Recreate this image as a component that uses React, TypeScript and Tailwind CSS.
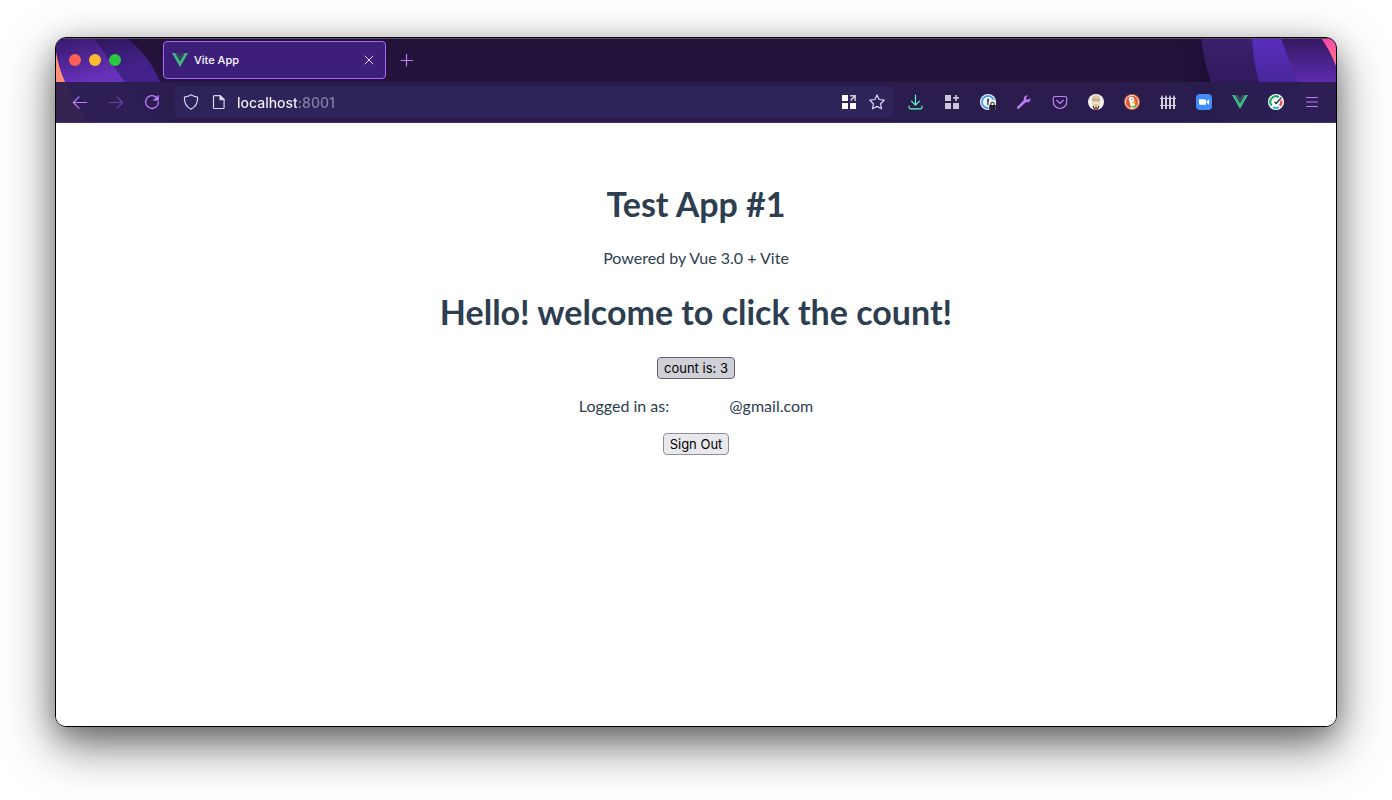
import { useState, type ReactNode } from "react";

function VueLogo() {
  return (
    <svg viewBox="0 0 16 14" className="h-[14px] w-4" aria-hidden="true">
      <path d="M0 0h3.2L8 8.2 12.8 0H16L8 13.9z" fill="#41b883" />
      <path d="M3.2 0h2.9L8 3.3 9.9 0h2.9L8 8.2z" fill="#35495e" />
    </svg>
  );
}

function Icon({ children, className = "" }: { children: ReactNode; className?: string }) {
  return (
    <svg
      viewBox="0 0 16 16"
      className={`size-4 shrink-0 ${className}`}
      fill="none"
      stroke="currentColor"
      strokeWidth="1.2"
      strokeLinecap="round"
      strokeLinejoin="round"
      aria-hidden="true"
    >
      {children}
    </svg>
  );
}

function ToolButton({ label, children, className = "" }: { label: string; children: ReactNode; className?: string }) {
  return (
    <button type="button" aria-label={label} className={`flex h-8 w-9 shrink-0 items-center justify-center text-[#bd7df8] ${className}`}>
      {children}
    </button>
  );
}

function HeaderArt() {
  return (
    <div className="pointer-events-none absolute inset-0 flex justify-between" aria-hidden="true">
      <svg viewBox="0 0 110 84" className="h-[84px] w-[110px]">
        <defs>
          <linearGradient id="la" x1="0" y1="0" x2="0.3" y2="1">
            <stop offset="0" stopColor="#35196a" />
            <stop offset="0.55" stopColor="#6831ba" />
          </linearGradient>
          <linearGradient id="lb" x1="0" y1="0" x2="0.3" y2="1">
            <stop offset="0" stopColor="#2a1550" />
            <stop offset="0.5" stopColor="#43218a" />
          </linearGradient>
        </defs>
        <path d="M0 0H70Q92 15 104 44L110 84H0z" fill="url(#lb)" />
        <path d="M0 0H38Q53 22 69 44L98 84H0z" fill="url(#la)" />
        <path d="M0 14Q3 31 9 44L30 84H0z" fill="#ff9077" />
      </svg>
      <svg viewBox="0 0 160 84" className="h-[84px] w-[160px]">
        <defs>
          <linearGradient id="rs" x1="0" y1="0" x2="1" y2="0">
            <stop offset="0" stopColor="#180c30" stopOpacity="0" />
            <stop offset="1" stopColor="#180c30" stopOpacity="0.8" />
          </linearGradient>
          <linearGradient id="ra" x1="0" y1="0" x2="0" y2="0.55">
            <stop offset="0" stopColor="#39206c" />
            <stop offset="1" stopColor="#321a5e" />
          </linearGradient>
          <linearGradient id="rb" x1="0" y1="0" x2="0" y2="0.55">
            <stop offset="0" stopColor="#5a2dbd" />
            <stop offset="1" stopColor="#47279a" />
          </linearGradient>
          <linearGradient id="rc" x1="0" y1="0" x2="0" y2="0.55">
            <stop offset="0" stopColor="#351861" />
            <stop offset="1" stopColor="#602cb0" />
          </linearGradient>
          <linearGradient id="rd" x1="0" y1="0" x2="0" y2="1">
            <stop offset="0" stopColor="#ff45a5" />
            <stop offset="1" stopColor="#ff7c8c" />
          </linearGradient>
        </defs>
        <path d="M0 0H30L36 44V84H0z" fill="url(#rs)" />
        <path d="M25 0Q28 24 35 44L50 84H160V0z" fill="url(#ra)" />
        <path d="M76 0Q77 22 83 44L95 84H160V0z" fill="url(#rb)" />
        <path d="M105 0Q112 22 122 44L140 84H160V0z" fill="url(#rc)" />
        <path d="M145 0Q154 12 160 28V0z" fill="url(#rd)" />
      </svg>
    </div>
  );
}

function TabBar() {
  return (
    <div className="relative flex h-11 items-center shadow-[inset_0_1px_0_#5a4c71]">
      <div className="flex w-[107px] shrink-0 gap-2 pl-[13px]">
        <button type="button" aria-label="Close window" className="size-3 rounded-full bg-[#ff5f57]" />
        <button type="button" aria-label="Minimize window" className="size-3 rounded-full bg-[#febc2e]" />
        <button type="button" aria-label="Zoom window" className="size-3 rounded-full bg-[#28c840]" />
      </div>
      <div className="flex h-[38px] w-[223px] items-center rounded border border-[#a766f5] bg-[#3d1f79] pr-2 pl-2">
        <VueLogo />
        <span className="ml-[6px] flex-1 pt-px text-[11px] font-medium text-[#fbf8ff]">Vite App</span>
        <button type="button" aria-label="Close tab" className="flex size-4 items-center justify-center text-[#e6d8fa]">
          <Icon><path d="M4 4l8 8M12 4l-8 8" strokeWidth="1" /></Icon>
        </button>
      </div>
      <ToolButton label="New tab" className="ml-[3px]">
        <Icon><path d="M7.500 2.500v11.500M2 8.500h11.500" /></Icon>
      </ToolButton>
    </div>
  );
}

function AddressBar() {
  return (
    <div className="mx-[5px] flex h-8 min-w-0 flex-1 items-center rounded bg-[#2e2459] px-2 text-[#dcd2f3]">
      <Icon><path d="M8 .8c2 1.4 4.200 2 6.600 2.400.3 5-1.500 9.200-6.600 12C2.900 12.400 1.100 8.200 1.400 3.200 3.800 2.800 6 2.200 8 .8z" /></Icon>
      <Icon className="ml-3">
        <path d="M3.500 1.600h5.700l3.900 3.900v8a1 1 0 0 1-1 1H3.500a1 1 0 0 1-1-1v-10.900a1 1 0 0 1 1-1z" />
        <path d="M9 1.600v4h4.100z" fill="currentColor" />
      </Icon>
      <input
        type="text"
        aria-label="Address"
        defaultValue="localhost:8001"
        className="ml-[10px] min-w-0 flex-1 bg-linear-to-r from-[#f6f2ff] from-[60px] to-[#8b80aa] to-[60px] bg-clip-text pt-px text-sm font-medium text-transparent outline-none"
      />
      <button type="button" aria-label="Open containers" className="flex size-4 items-center justify-center">
        <Icon>
          <path d="M1 1h6v6H1zM1 9h6v6H1zM9 9h6v6H9z" fill="#fff" stroke="none" />
          <path d="M9 1h6v6h-1.500V3.800L10.300 7 9 5.700l3.200-3.200H9z" fill="#c9c7cc" stroke="none" />
        </Icon>
      </button>
      <button type="button" aria-label="Bookmark this page" className="ml-3 flex size-4 items-center justify-center">
        <Icon><path d="M8 .9l2.200 4.600 5 .7-3.600 3.500.9 5.100L8 12.400l-4.500 2.400.9-5.100L.8 6.200l5-.7z" /></Icon>
      </button>
    </div>
  );
}

function Toolbar() {
  return (
    <div className="relative flex h-[41px] items-center border-b border-[#403478] bg-[#2a1d4ff2] px-[6px]">
      <ToolButton label="Back"><Icon><path d="M14.700 8.500H1.500M7 2.900L1.400 8.500 7 14.100" /></Icon></ToolButton>
      <ToolButton label="Forward" className="opacity-40"><Icon><path d="M1.300 8.500h13.200M9 2.900l5.600 5.600L9 14.100" /></Icon></ToolButton>
      <ToolButton label="Reload">
        <Icon><path d="M12.500 3.500A6.400 6.400 0 1 0 14.400 8" strokeWidth="1.300" /><path d="M14.300 1.700v4.500H9.800z" fill="currentColor" strokeWidth=".8" /></Icon>
      </ToolButton>
      <AddressBar />
      <ToolButton label="Downloads">
        <Icon className="text-[#54ffbd]"><path d="M7.500 1v10M3.500 7.200l4 4 4-4M1 12v1.300a1.500 1.500 0 0 0 1.500 1.500h10a1.500 1.500 0 0 0 1.500-1.500V12" /></Icon>
      </ToolButton>
      <ToolButton label="Extensions">
        <Icon className="text-[#cbc6d6]"><path d="M1 1h6v6H1zM1 9h6v6H1zM9 9h6v6H9zM11.200 1h1.700v2.100H15v1.700h-2.100v2.100h-1.700V4.800H9.100V3.100h2.100z" fill="currentColor" stroke="none" /></Icon>
      </ToolButton>
      <ToolButton label="Password manager">
        <Icon>
          <circle cx="8" cy="8" r="8" fill="#f7f8fb" stroke="none" />
          <circle cx="8" cy="8" r="6" stroke="#4b9cf5" strokeWidth="1.900" />
          <path d="M7.100 4.800h1.900v6.200H7.100z" fill="#33415b" stroke="none" />
          <path d="M8.500 10a3.500 3.500 0 0 1 7.500-1v7H8.500z" fill="#f7f8fb" stroke="none" />
          <path d="M9.200 11h6.600v5H9.200z" fill="#22252b" stroke="none" />
          <path d="M10.800 11.500V10a1.700 1.700 0 0 1 3.400 0v1.500" stroke="#22252b" strokeWidth="1.100" />
        </Icon>
      </ToolButton>
      <ToolButton label="Developer tools">
        <Icon>
          <path d="M14.300 4l-1.900 1.800-2-.3-.3-2 1.900-2C9.600.9 7.100 3 7.900 5.900L1.300 12.800c-1 1.200.7 2.800 1.800 1.800L10 8.100c3 .9 5.200-1.500 4.300-4.100z" fill="currentColor" stroke="none" />
          <path d="M2.300 13.700L9 7" strokeWidth="1" />
        </Icon>
      </ToolButton>
      <ToolButton label="Save to Pocket">
        <Icon><path d="M2.800 2.500h10.400a1.500 1.500 0 0 1 1.500 1.500v3.800a6.700 6.700 0 0 1-13.400 0V4a1.500 1.500 0 0 1 1.500-1.500z" /><path d="M4.700 6.300L8 9.500l3.300-3.200" /></Icon>
      </ToolButton>
      <ToolButton label="Account helper">
        <Icon>
          <circle cx="8" cy="8" r="8" fill="#f4f2ef" stroke="none" />
          <path d="M4.500 2Q8 .5 11.500 2l.5 3.500-.7 6L8 13l-3.300-1.500L4 5.500z" fill="#d9c4a3" stroke="none" />
          <path d="M4.300 5.700h3M8.800 5.700h3" stroke="#a38a6b" strokeWidth="1" />
          <path d="M5.500 9.600Q8 8 10.500 9.600" stroke="#f5ead9" strokeWidth="1.500" />
          <path d="M5.300 12.500l1.200 2.700M10.700 12.500l-1.200 2.700" stroke="#30303c" />
          <path d="M7.200 12.400h1.600l.5 3.300H6.700z" fill="#d63b35" stroke="none" />
        </Icon>
      </ToolButton>
      <ToolButton label="Privacy protection">
        <Icon>
          <circle cx="8" cy="8" r="8" fill="#de5833" stroke="none" />
          <circle cx="8" cy="8" r="6.600" stroke="#fff" strokeWidth=".9" />
          <path d="M4.700 4.500C5.500 2 10 2.200 10.300 5.600l.2 3.300 1 4.200q-2 1.500-4.300 1.200z" fill="#fff" stroke="none" />
          <path d="M8.300 7.300l4.400-.3-2 1.500 1.300 1.200-3.700-.3z" fill="#fdbd20" stroke="none" />
          <path d="M7.600 11.300l1.900.8 2.200-.9v2.600l-2.200-.6-1.900.8z" fill="#4cba3c" stroke="none" />
          <circle cx="7.900" cy="5.300" r=".6" fill="#293d55" stroke="none" />
        </Icon>
      </ToolButton>
      <ToolButton label="Containers">
        <Icon className="text-[#d1ccd8]">
          <path d="M0 4.500h16M0 11.500h16" strokeWidth="1" strokeLinecap="butt" />
          <path d="M2 15V2.500M6 15V2.500M10 15V2.500M14 15V2.500" strokeWidth="2" strokeLinecap="butt" />
          <path d="M1 2.500L2 1l1 1.500zM5 2.500L6 1l1 1.500zM9 2.500L10 1l1 1.500zM13 2.500L14 1l1 1.500z" fill="currentColor" stroke="none" />
        </Icon>
      </ToolButton>
      <ToolButton label="Video meeting">
        <Icon>
          <rect width="16" height="16" rx="4" fill="#418cfb" stroke="none" />
          <path d="M3 5.200h5.500a1.500 1.500 0 0 1 1.500 1.500v4.100H4.500A1.500 1.500 0 0 1 3 9.300zM10.600 7.200L13.200 5.300v5.400l-2.600-1.900z" fill="#fff" stroke="none" />
        </Icon>
      </ToolButton>
      <ToolButton label="Vue devtools"><VueLogo /></ToolButton>
      <ToolButton label="Performance">
        <Icon>
          <circle cx="8" cy="8" r="8" fill="#fff" stroke="none" />
          <path d="M3.700 11.500A5.500 5.500 0 0 1 10.700 3.200" stroke="#16ae62" strokeWidth="2.200" strokeLinecap="butt" />
          <path d="M13.200 6.500a5.500 5.500 0 0 1-1.500 5.400" stroke="#ed4b4c" strokeWidth="2.200" strokeLinecap="butt" />
          <path d="M5 13.200q3 1.600 6 0" stroke="#27b5df" strokeWidth="2" strokeLinecap="butt" />
          <path d="M6.800 8.300l1.400 1.200L13 4" stroke="#263446" strokeWidth="1.400" />
        </Icon>
      </ToolButton>
      <ToolButton label="Application menu"><Icon><path d="M2.500 3.500h11M2.500 8h11M2.500 12.500h11" strokeWidth="1" /></Icon></ToolButton>
    </div>
  );
}

function Page() {
  const [count, setCount] = useState(3);
  const button =
    "flex h-[22px] items-center rounded border px-[6px] pt-px font-['Inter',sans-serif] text-[13px] text-black";
  return (
    <main className="flex flex-1 flex-col items-center bg-white pt-15 text-center font-['Lato',sans-serif] text-base text-[#2c3e50]">
      <h1 className="text-[34px] leading-[42px] font-bold">Test App #1</h1>
      <p className="mt-[22px] leading-[22px]">Powered by Vue 3.0 + Vite</p>
      <h1 className="mt-[22px] text-[34px] leading-[42px] font-bold">Hello! welcome to click the count!</h1>
      <button type="button" onClick={() => setCount(count + 1)} className={`${button} mt-6 border-[#5f5e6e] bg-[#d0d0d7]`}>
        count is: {count}
      </button>
      <p className="mt-4 flex gap-[60px] leading-[22px]">
        <span>Logged in as:</span>
        <span>@gmail.com</span>
      </p>
      <button type="button" className={`${button} mt-4 border-[#8f8f9d] bg-[#e9e9ed]`}>
        Sign Out
      </button>
    </main>
  );
}

export default function App() {
  return (
    <div className="flex min-h-screen bg-white px-[55px] pt-[37px] pb-[73px] font-['Inter',sans-serif]">
      <div className="flex min-w-0 flex-1 flex-col overflow-hidden rounded-[11px] border border-black shadow-[0_18px_50px_rgba(0,0,0,0.55),0_8px_24px_rgba(0,0,0,0.22)]">
        <header className="relative bg-linear-to-b from-[#22123a] to-[#271741]">
          <HeaderArt />
          <TabBar />
          <Toolbar />
        </header>
        <Page />
      </div>
    </div>
  );
}
